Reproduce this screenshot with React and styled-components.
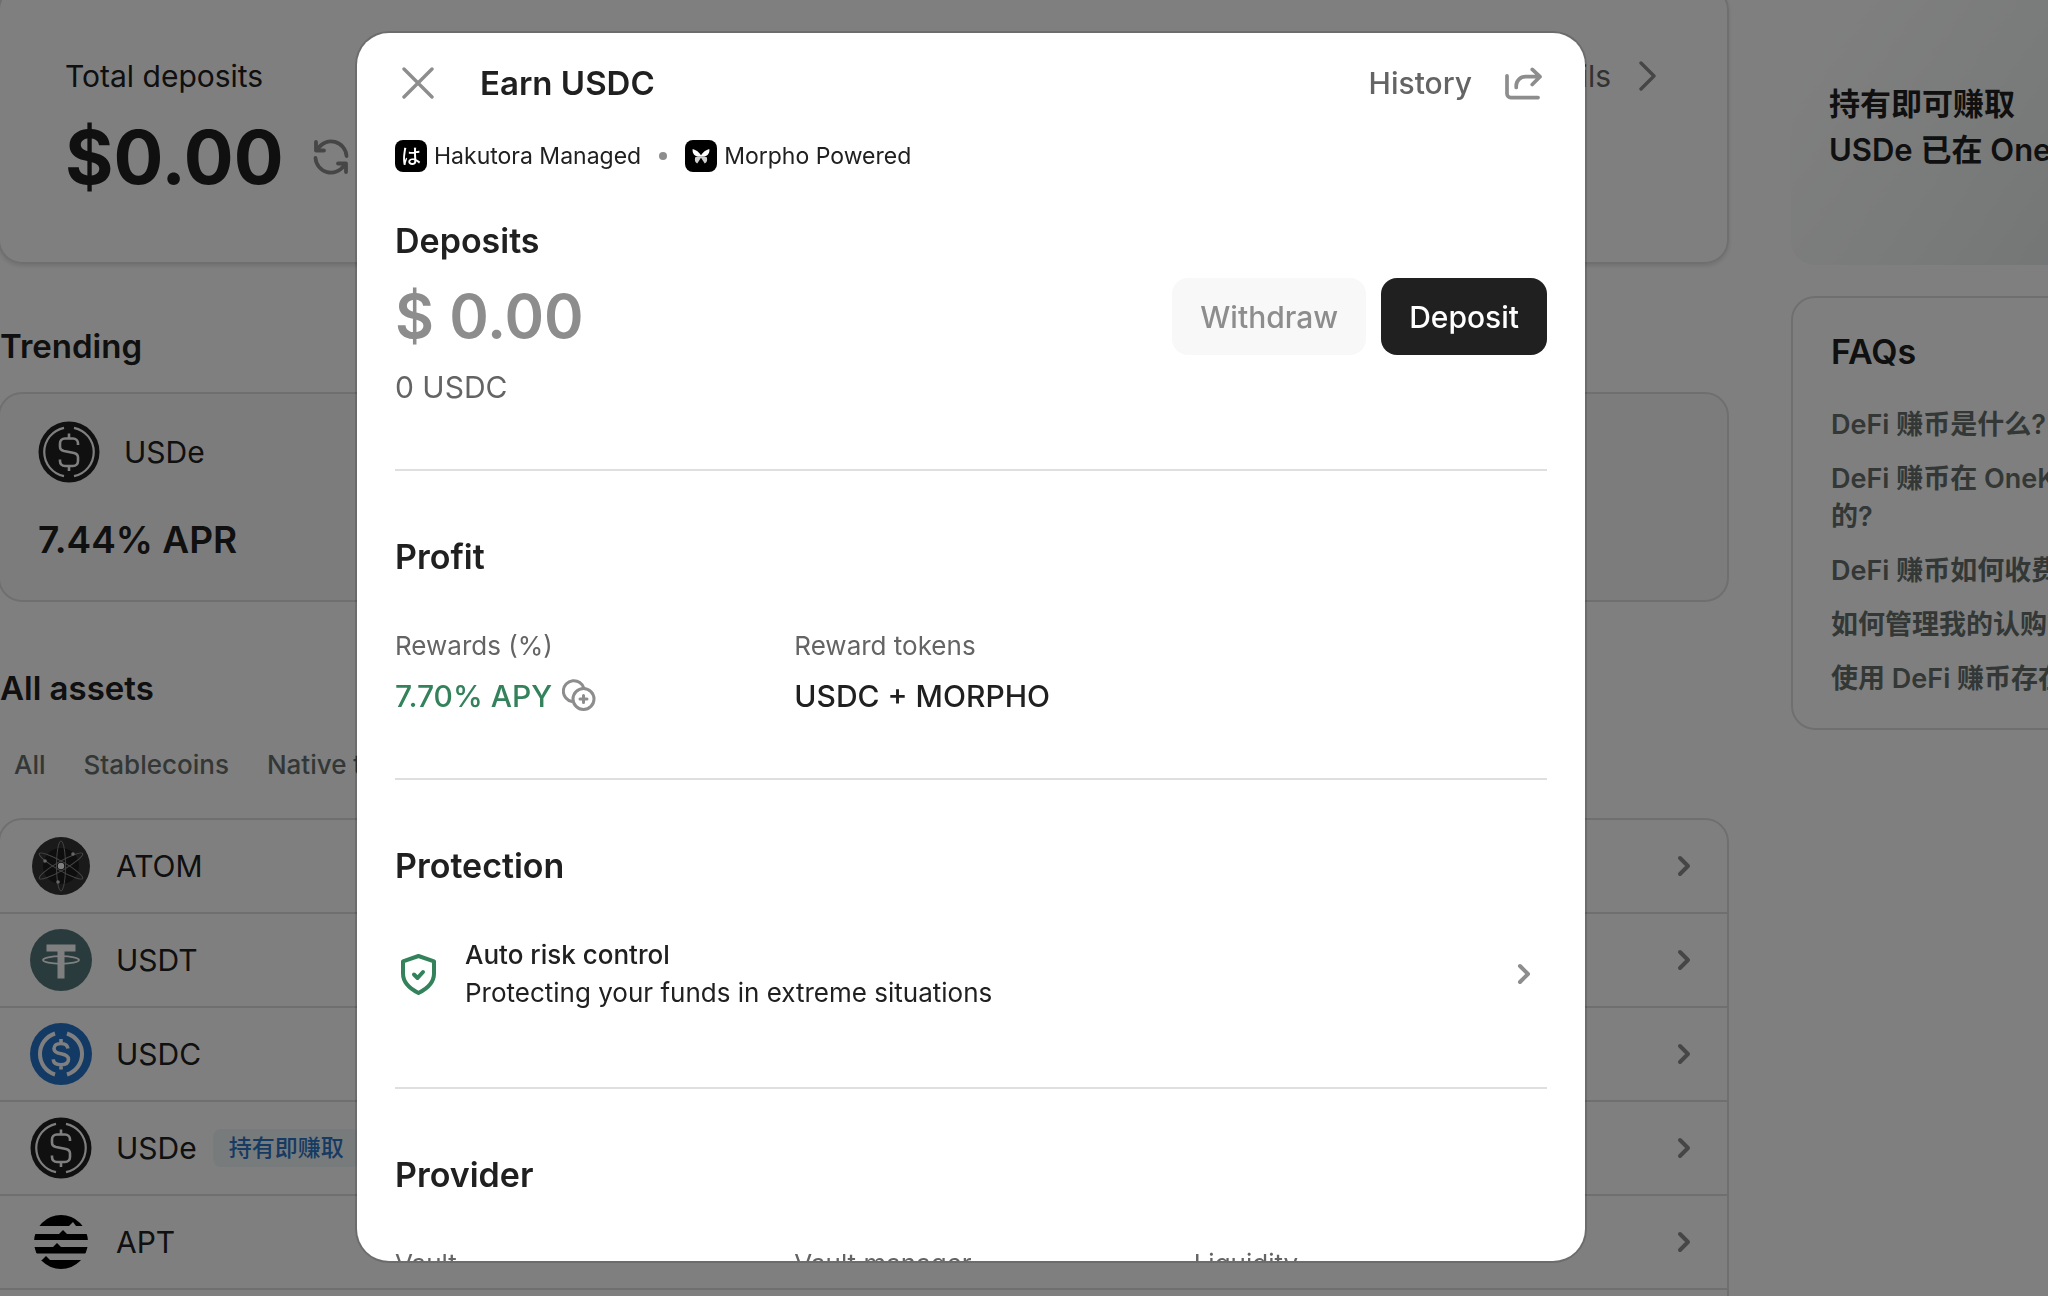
import React from "react";
import styled, { createGlobalStyle } from "styled-components";

const GlobalStyle = createGlobalStyle`
  *, *::before, *::after { box-sizing: border-box; }
  body {
    margin: 0;
    overflow: hidden;
    background: #fff;
    color: #202020;
    font-family: Inter, "Noto Sans CJK SC", sans-serif;
    font-size: 30px;
    line-height: 46px;
  }
  h1, h2, h3, p, ul, dl, dd { margin: 0; padding: 0; }
  ul { list-style: none; }
  svg { display: block; flex: none; }
  button { font: inherit; color: inherit; border: 0; background: none; padding: 0; }
`;

const Viewport = styled.div`
  height: 100vh;
  overflow: hidden;
`;

const Page = styled.div`
  display: grid;
  grid-template-columns: minmax(0, 1fr) 416px;
  column-gap: 62px;
  margin: -14px -159px 0 -2px;
`;

const Main = styled.main`
  display: flex;
  flex-direction: column;
`;

const Card = styled.section`
  border: 2px solid #dfdfdf;
  border-radius: 24px;
`;

const TotalCard = styled(Card)`
  display: flex;
  justify-content: space-between;
  align-items: flex-start;
  height: 278px;
  padding: 65px 70px 0 65px;
  box-shadow: 0 2px 4px rgba(0, 0, 0, 0.12);
`;

const Amount = styled.div`
  display: flex;
  align-items: center;
  gap: 28px;
  padding-top: 20px;
  font-size: 74px;
  line-height: 76px;
  font-weight: 700;
`;

const DetailsLink = styled.a`
  display: flex;
  align-items: center;
  gap: 28px;
  color: #646464;
  text-decoration: none;
`;

const Heading = styled.h2`
  font-size: 34px;
  line-height: 40px;
  font-weight: 600;
`;

const PageHeading = styled(Heading)`
  padding: 0 2px;
  margin: ${(p) => (p.$spaced ? "66px" : "62px")} 0 26px;
  font-size: 33px;
`;

const TrendingCard = styled(Card)`
  display: flex;
  flex-direction: column;
  gap: 33px;
  height: 210px;
  padding: 27px 38px;
  background: #f9f9f9;
`;

const Token = styled.div`
  display: flex;
  align-items: center;
  gap: 24px;
`;

const Rate = styled.p`
  font-size: 37px;
  line-height: 48px;
  font-weight: 600;
`;

const Tabs = styled.nav`
  display: flex;
  gap: 38px;
  padding: 12px 16px 34px;
  font-size: 26px;
  line-height: 38px;
  color: #66716d;
  font-weight: 500;
`;

const AssetList = styled.ul`
  border: 2px solid #dfdfdf;
  border-radius: 24px;
`;

const AssetRow = styled.li`
  border-top: ${(p) => (p.$first ? "0" : "2px solid #dfdfdf")};
  height: ${(p) => (p.$first ? "92px" : "94px")};
`;

const AssetButton = styled.button`
  display: flex;
  align-items: center;
  width: 100%;
  height: 92px;
  padding: 0 24px 0 30px;
  gap: 24px;
  text-align: left;
`;

const AssetName = styled.span`
  display: flex;
  align-items: center;
  gap: 16px;
  flex: 1;
`;

const Tag = styled.span`
  padding: 0 16px;
  border-radius: 8px;
  background: #f0f6f8;
  color: #2d74c4;
  font-size: 23px;
  line-height: 38px;
  font-weight: 500;
`;

const Aside = styled.aside`
  display: flex;
  flex-direction: column;
  gap: 31px;
`;

const Banner = styled.section`
  height: 279px;
  padding: 95px 38px 0;
  border-radius: 24px;
  background: linear-gradient(125deg, #fff 10%, #eff2f2 60%, #dfe6e6 100%);
  font-size: 31px;
  font-weight: 600;
  white-space: nowrap;
  overflow: hidden;
`;

const FaqCard = styled(Card)`
  display: flex;
  flex-direction: column;
  gap: 34px;
  height: 434px;
  padding: 34px 38px 0;
`;

const FaqItems = styled.ul`
  display: flex;
  flex-direction: column;
  gap: 16px;
  font-size: 27px;
  line-height: 38px;
  font-weight: 600;
  color: #66716d;
  white-space: nowrap;
`;

const PlainLink = styled.a`
  color: inherit;
  text-decoration: none;
`;

const Overlay = styled.div`
  position: fixed;
  inset: 0;
  display: flex;
  justify-content: center;
  padding: 33px 106px 35px 0;
  background: rgba(0, 0, 0, 0.5);
`;

const Modal = styled.div`
  width: 100%;
  max-width: 1228px;
  padding: 0 38px;
  overflow: hidden;
  border-radius: 32px;
  background: #fff;
  box-shadow: 0 0 0 2px rgba(0, 0, 0, 0.15);
`;

const ModalHeader = styled.header`
  display: flex;
  align-items: center;
  height: 100px;
  padding: 0 5px 0 7px;
`;

const ModalTitle = styled(Heading)`
  flex: 1;
  padding-left: 46px;
  font-size: 33px;
`;

const HeaderActions = styled.div`
  display: flex;
  align-items: center;
  gap: 33px;
  color: #646464;
  font-weight: 500;
`;

const Partners = styled.div`
  display: flex;
  align-items: center;
  gap: 18px;
  font-size: 23px;
  line-height: 46px;
`;

const Partner = styled.span`
  display: flex;
  align-items: center;
  gap: 7px;
`;

const PartnerMark = styled.span`
  display: flex;
  align-items: center;
  justify-content: center;
  width: 32px;
  height: 32px;
  border-radius: 8px;
  background: #000;
  color: #fff;
  font-family: "Noto Sans CJK JP", sans-serif;
  font-size: 20px;
  line-height: 28px;
  font-weight: 500;
`;

const Dot = styled.span`
  width: 8px;
  height: 8px;
  border-radius: 50%;
  background: #8d8d8d;
`;

const DepositBlock = styled.section`
  display: flex;
  flex-direction: column;
  padding: 42px 0 59px;
`;

const DepositRow = styled.div`
  display: flex;
  align-items: center;
  justify-content: space-between;
  margin: 17px 0 9px;
`;

const DepositValue = styled.p`
  font-size: 60px;
  line-height: 77px;
  font-weight: 600;
  color: #8d8d8d;
`;

const ButtonGroup = styled.div`
  display: flex;
  gap: 15px;
`;

const ActionButton = styled.button`
  height: 77px;
  padding: 0 28px;
  border-radius: 16px;
  font-weight: 500;
  color: ${(p) => (p.$primary ? "#fff" : "#8d8d8d")};
  background: ${(p) => (p.$primary ? "#202020" : "#f8f8f8")};
`;

const Muted = styled.p`
  color: #646464;
`;

const Section = styled.section`
  display: flex;
  flex-direction: column;
  gap: 50px;
  padding: 66px 0 59px;
  border-top: 2px solid #dfdfdf;
`;

const Facts = styled.dl`
  display: grid;
  grid-template-columns: repeat(3, minmax(0, 1fr));
  column-gap: 46px;
`;

const FactLabel = styled.dt`
  font-size: 26px;
  line-height: 38px;
  margin-bottom: 8px;
  color: #646464;
`;

const FactValue = styled.dd`
  display: flex;
  align-items: center;
  gap: 10px;
  font-weight: 500;
  color: ${(p) => (p.$positive ? "#34825b" : "#202020")};
`;

const RiskRow = styled.button`
  display: flex;
  align-items: center;
  gap: 24px;
  padding: 0 4px 16px 0;
  text-align: left;
  font-size: 26px;
  line-height: 38px;
`;

const RiskText = styled.span`
  display: flex;
  flex-direction: column;
  flex: 1;
`;

const RiskTitle = styled.span`
  font-weight: 500;
`;

const Chevron = ({ color = "#8d8d8d" }) => (
  <svg width="38" height="38" viewBox="0 0 38 38" fill="none" stroke={color} strokeWidth="4" strokeLinecap="round" strokeLinejoin="round" aria-hidden="true">
    <path d="M15 11l8 8-8 8" />
  </svg>
);

const RefreshIcon = () => (
  <svg width="38" height="38" viewBox="0 0 38 38" fill="none" stroke="#8d8d8d" strokeWidth="3.800" strokeLinecap="round" strokeLinejoin="round" aria-hidden="true">
    <path d="M4 4v8.500h8M34 34v-8.500h-8" />
    <path d="M6 10.500A15.500 15.500 0 0 1 34.500 18M32 27.500A15.500 15.500 0 0 1 3.500 20" />
  </svg>
);

const CloseIcon = () => (
  <svg width="32" height="32" viewBox="0 0 32 32" fill="none" stroke="#8d8d8d" strokeWidth="3.400" strokeLinecap="round" aria-hidden="true">
    <path d="M2 2l28 28M30 2L2 30" />
  </svg>
);

const ShareIcon = () => (
  <svg width="37" height="33" viewBox="0 0 38 34" fill="none" stroke="#8d8d8d" strokeWidth="3.800" strokeLinecap="round" strokeLinejoin="round" aria-hidden="true">
    <path d="M2 9v18.500a4 4 0 0 0 4 4H34" />
    <path d="M11.500 21v-1.500a9.500 9.500 0 0 1 9.500-9.500H35M28 2.500l8 7.500-8 8" />
  </svg>
);

const CoinsIcon = () => (
  <svg width="34" height="34" viewBox="0 0 34 34" fill="none" stroke="#8d8d8d" strokeWidth="3" strokeLinecap="round" aria-hidden="true">
    <path d="M10 22.500A10.500 10.500 0 1 1 22 9.500" />
    <circle cx="21.500" cy="20" r="10.500" />
    <path d="M21.500 16.500v7M18 20h7" />
  </svg>
);

const ShieldIcon = () => (
  <svg width="46" height="46" viewBox="0 0 46 46" fill="none" stroke="#34825b" strokeWidth="4" strokeLinecap="round" strokeLinejoin="round" aria-hidden="true">
    <path d="M23.500 5l15.500 5.300v12.200c0 9-6 14.800-15.500 19.500C14 37.300 8 31.500 8 22.500V10.300z" />
    <path d="M19 23.500l3.500 3.500 5.500-6" />
  </svg>
);

const Butterfly = () => (
  <svg width="20" height="20" viewBox="0 0 24 24" aria-hidden="true">
    <path d="M2 3.500c4 1 8 4 10 7.500 2-3.500 6-6.500 10-7.500.6 4.500-1.500 8-5.500 9L12 13l-4.500-.5C3.500 11.500 1.400 8 2 3.500z" fill="#fff" />
    <path d="M5 13.500l4-1 3 .5 3-.5 4 1c1 3.500 0 6.500-2.500 7.500L12 14l-4.500 7C5 20 4 17 5 13.500z" fill="#cfcfcf" />
  </svg>
);

const UsdeIcon = () => (
  <svg width="62" height="62" viewBox="0 0 62 62" fill="none" aria-hidden="true">
    <circle cx="31" cy="31" r="30.500" fill="#202020" />
    <g stroke="#fff" strokeWidth="2.600">
      <path d="M26 6.800a24.700 24.700 0 0 0 0 48.400M36 6.800a24.700 24.700 0 0 1 0 48.400" strokeWidth="2.200" />
      <path d="M40 24v-1.500c0-3-2.200-5-5-5h-8c-3 0-5 2.200-5 5v3c0 2.600 1.500 4 4 4.600l10 2c2.600.6 4 2 4 4.500V40c0 3-2.200 5-5 5h-8c-3 0-5-2-5-5v-1.500M31 12.500v5M31 45v5" />
    </g>
  </svg>
);

const UsdcIcon = () => (
  <svg width="62" height="62" viewBox="0 0 62 62" fill="none" stroke="#fff" aria-hidden="true">
    <circle cx="31" cy="31" r="31" fill="#2775ca" stroke="none" />
    <path d="M25 10.500a21.500 21.500 0 0 0 0 41M37 10.500a21.500 21.500 0 0 1 0 41" strokeWidth="4" />
    <path d="M38 25.500c-.5-3.300-3-5-7-5s-7 1.700-7 5c0 3.200 2.600 4.500 7 5.200 4.600.8 7.500 2 7.500 5.600s-3 5.400-7.500 5.400-7.500-2-7.800-5.400M31 16v4.500M31 42v4.500" strokeWidth="3.600" />
  </svg>
);

const UsdtIcon = () => (
  <svg width="62" height="62" viewBox="0 0 62 62" aria-hidden="true">
    <circle cx="31" cy="31" r="31" fill="#55777a" />
    <path d="M16.500 15.500h29V22.500h-11V49.500h-7V22.500h-11z" fill="#fff" />
    <ellipse cx="31" cy="31" rx="18" ry="3.800" fill="none" stroke="#fff" strokeWidth="1.800" />
  </svg>
);

const AtomIcon = () => (
  <svg width="62" height="62" viewBox="0 0 62 62" fill="none" aria-hidden="true">
    <circle cx="31" cy="31" r="29" fill="#343434" />
    <circle cx="31" cy="31" r="18" fill="#1c1c1c" />
    <g stroke="#8a8a8a" strokeWidth="1">
      <ellipse cx="31" cy="31" rx="4.500" ry="25" />
      <ellipse cx="31" cy="31" rx="4.500" ry="25" transform="rotate(60 31 31)" />
      <ellipse cx="31" cy="31" rx="4.500" ry="25" transform="rotate(-60 31 31)" />
    </g>
    <circle cx="31" cy="31" r="3.200" fill="#fff" />
    <g fill="#ccc">
      <circle cx="15" cy="26" r="1.800" />
      <circle cx="43" cy="19" r="1.800" />
      <circle cx="28" cy="47" r="1.800" />
    </g>
  </svg>
);

const AptIcon = () => (
  <svg width="62" height="62" viewBox="0 0 62 62" aria-hidden="true">
    <clipPath id="apt-disc"><circle cx="31" cy="31" r="27" /></clipPath>
    <g clipPath="url(#apt-disc)">
      <path d="M0 0H62V15H46l-3-4-4 4H0z" />
      <path d="M0 23H29l4-4 4 4H62v6H0z" />
      <path d="M0 36H23l4-4 4 4H62v6.500H0z" />
      <path d="M0 49H12l4-4 4 4H62V62H0z" />
    </g>
  </svg>
);

const assets = [
  { name: "ATOM", Icon: AtomIcon },
  { name: "USDT", Icon: UsdtIcon },
  { name: "USDC", Icon: UsdcIcon },
  { name: "USDe", Icon: UsdeIcon, tag: "持有即赚取" },
  { name: "APT", Icon: AptIcon },
];

export default function App() {
  return (
    <Viewport>
      <GlobalStyle />
      <Page>
        <Main>
          <TotalCard>
            <div>
              <p>Total deposits</p>
              <Amount>
                $0.00
                <button aria-label="Refresh"><RefreshIcon /></button>
              </Amount>
            </div>
            <DetailsLink href="#details">
              Details
              <svg width="18" height="32" viewBox="0 0 18 32" fill="none" stroke="#8d8d8d" strokeWidth="3.400" strokeLinecap="round" strokeLinejoin="round" aria-hidden="true">
                <path d="M2 3l13 13L2 29" />
              </svg>
            </DetailsLink>
          </TotalCard>

          <PageHeading>Trending</PageHeading>
          <TrendingCard>
            <Token>
              <UsdeIcon />
              USDe
            </Token>
            <Rate>7.44% APR</Rate>
          </TrendingCard>

          <PageHeading $spaced>All assets</PageHeading>
          <Tabs>
            <PlainLink href="#all">All</PlainLink>
            <PlainLink href="#stablecoins">Stablecoins</PlainLink>
            <PlainLink href="#native">Native t</PlainLink>
          </Tabs>
          <AssetList>
            {assets.map(({ name, Icon, tag }, i) => (
              <AssetRow key={name} $first={i === 0}>
                <AssetButton>
                  <Icon />
                  <AssetName>
                    {name}
                    {tag && <Tag>{tag}</Tag>}
                  </AssetName>
                  <Chevron />
                </AssetButton>
              </AssetRow>
            ))}
            <AssetRow />
          </AssetList>
        </Main>

        <Aside>
          <Banner>
            <p>持有即可赚取</p>
            <p>USDe 已在 One</p>
          </Banner>
          <FaqCard>
            <Heading>FAQs</Heading>
            <FaqItems>
              <li><PlainLink href="#faq-1">DeFi 赚币是什么?</PlainLink></li>
              <li><PlainLink href="#faq-2">DeFi 赚币在 OneK<br />的?</PlainLink></li>
              <li><PlainLink href="#faq-3">DeFi 赚币如何收费</PlainLink></li>
              <li><PlainLink href="#faq-4">如何管理我的认购</PlainLink></li>
              <li><PlainLink href="#faq-5">使用 DeFi 赚币存在</PlainLink></li>
            </FaqItems>
          </FaqCard>
        </Aside>
      </Page>

      <Overlay>
        <Modal role="dialog" aria-modal="true" aria-labelledby="earn-title">
          <ModalHeader>
            <button aria-label="Close"><CloseIcon /></button>
            <ModalTitle id="earn-title">Earn USDC</ModalTitle>
            <HeaderActions>
              <button>History</button>
              <button aria-label="Share"><ShareIcon /></button>
            </HeaderActions>
          </ModalHeader>

          <Partners>
            <Partner><PartnerMark>は</PartnerMark>Hakutora Managed</Partner>
            <Dot />
            <Partner><PartnerMark><Butterfly /></PartnerMark>Morpho Powered</Partner>
          </Partners>

          <DepositBlock>
            <Heading>Deposits</Heading>
            <DepositRow>
              <DepositValue>$ 0.00</DepositValue>
              <ButtonGroup>
                <ActionButton disabled>Withdraw</ActionButton>
                <ActionButton $primary>Deposit</ActionButton>
              </ButtonGroup>
            </DepositRow>
            <Muted>0 USDC</Muted>
          </DepositBlock>

          <Section>
            <Heading>Profit</Heading>
            <Facts>
              <div>
                <FactLabel>Rewards (%)</FactLabel>
                <FactValue $positive>7.70% APY<CoinsIcon /></FactValue>
              </div>
              <div>
                <FactLabel>Reward tokens</FactLabel>
                <FactValue>USDC + MORPHO</FactValue>
              </div>
            </Facts>
          </Section>

          <Section>
            <Heading>Protection</Heading>
            <RiskRow>
              <ShieldIcon />
              <RiskText>
                <RiskTitle>Auto risk control</RiskTitle>
                <span>Protecting your funds in extreme situations</span>
              </RiskText>
              <Chevron />
            </RiskRow>
          </Section>

          <Section>
            <Heading>Provider</Heading>
            <Facts>
              <FactLabel>Vault</FactLabel>
              <FactLabel>Vault manager</FactLabel>
              <FactLabel>Liquidity</FactLabel>
            </Facts>
          </Section>
        </Modal>
      </Overlay>
    </Viewport>
  );
}
